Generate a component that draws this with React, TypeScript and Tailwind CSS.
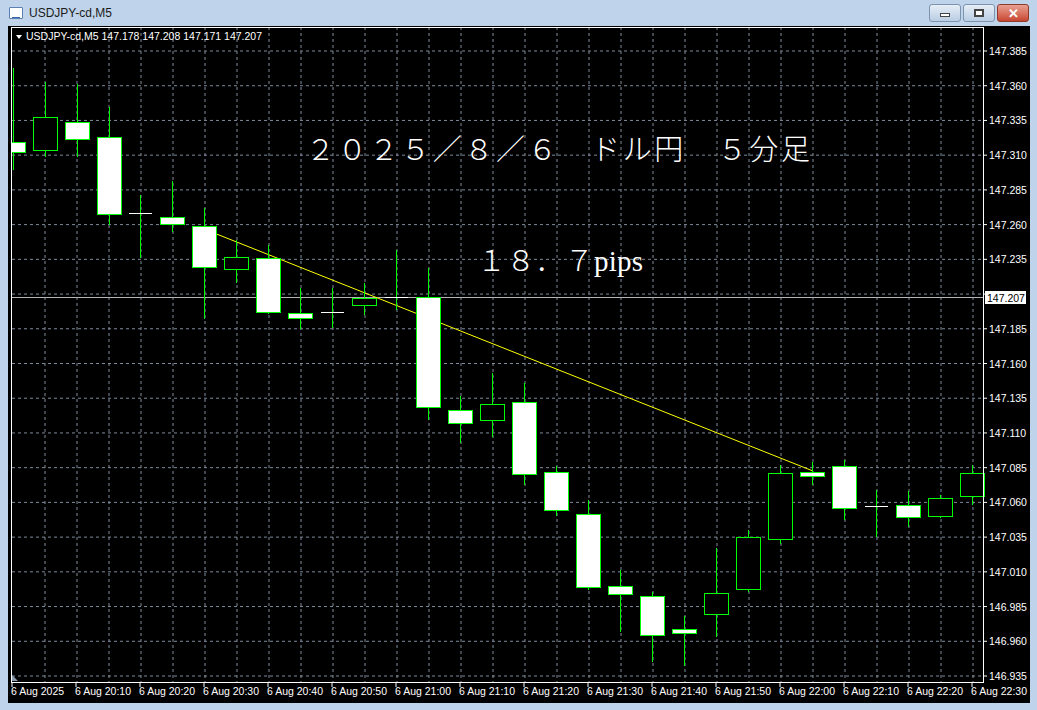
import React from 'react';

type C = [number, number, number, number, number, boolean]; // x, bodyTop, bodyBottom, high, low, bull
const candles: C[] = [
  [13, 142, 152, 68, 170, false],
  [45, 117, 150, 82, 157, true],
  [77, 122, 139, 84, 157, false],
  [109, 137, 214, 107, 225, false],
  [140, 213, 213, 195, 258, false],
  [172, 217, 224, 181, 232, false],
  [204, 226, 267, 208, 319, false],
  [236, 257, 269, 240, 283, true],
  [268, 258, 312, 245, 314, false],
  [300, 313, 318, 288, 329, false],
  [332, 312, 312, 288, 328, false],
  [364, 298, 305, 283, 315, true],
  [396, 297, 297, 250, 310, false],
  [428, 297, 407, 268, 420, false],
  [460, 410, 423, 396, 443, false],
  [492, 404, 420, 373, 437, true],
  [524, 402, 474, 383, 485, false],
  [556, 472, 510, 466, 516, false],
  [588, 514, 587, 500, 590, false],
  [620, 586, 594, 570, 632, false],
  [652, 596, 635, 592, 662, false],
  [684, 629, 633, 616, 666, false],
  [716, 593, 614, 548, 637, true],
  [748, 537, 589, 530, 592, true],
  [780, 473, 539, 465, 544, true],
  [812, 472, 476, 462, 485, false],
  [844, 466, 508, 460, 520, false],
  [876, 506, 506, 490, 537, false],
  [908, 505, 517, 491, 527, false],
  [940, 498, 516, 495, 518, true],
  [972, 473, 496, 465, 505, true],
];

const times = ['6 Aug 2025', '6 Aug 20:10', '6 Aug 20:20', '6 Aug 20:30', '6 Aug 20:40', '6 Aug 20:50', '6 Aug 21:00', '6 Aug 21:10', '6 Aug 21:20', '6 Aug 21:30', '6 Aug 21:40', '6 Aug 21:50', '6 Aug 22:00', '6 Aug 22:10', '6 Aug 22:20', '6 Aug 22:30'];

const step = 625 / 18;
const rows = Array.from({ length: 19 }, (_, k) => ({ y: 51 + k * step, p: (147.385 - k * 0.025).toFixed(3) }));
const cols = Array.from({ length: 30 }, (_, k) => 45 + 32 * k);

function Chart() {
  return (
    <svg viewBox="8 26 1022 677" width="1022" height="677" className="block" style={{ fontFamily: '"Liberation Sans", Arial, sans-serif' }}>
      <rect x="8" y="26" width="1022" height="677" fill="#000" />
      {rows.map((r) => (
        <line key={r.y} x1="12" x2="983" y1={r.y} y2={r.y} stroke="#7f8c9c" strokeDasharray="3 3" />
      ))}
      {cols.map((x) => (
        <line key={x} x1={x} x2={x} y1="27" y2="682" stroke="#7f8c9c" strokeDasharray="3 3" />
      ))}
      <line x1="12" x2="983" y1="297.5" y2="297.5" stroke="#b4b4b4" />
      <line x1="214" y1="233" x2="813" y2="471" stroke="#ffff00" />
      <g>
        {candles.map(([x, t, b, h, l, bull], i) => (
          <g key={i}>
            <line x1={x + 0.5} x2={x + 0.5} y1={h} y2={l} stroke="#00ff00" />
            {b - t < 1 ? (
              <line x1={x - 11} x2={x + 12} y1={t + 0.5} y2={t + 0.5} stroke="#fff" />
            ) : (
              <rect x={x - 11.5} y={t + 0.5} width="24" height={b - t} fill={bull ? '#000' : '#fff'} stroke="#00ff00" />
            )}
          </g>
        ))}
      </g>
      <rect x="8" y="26" width="3" height="677" fill="#000" />
      <line x1="11.5" x2="11.5" y1="27" y2="682" stroke="#fff" />
      <line x1="11" x2="983" y1="682.5" y2="682.5" stroke="#fff" />
      <line x1="983.5" x2="983.5" y1="27" y2="683" stroke="#fff" />
      <line x1="11" x2="984" y1="27.5" y2="27.5" stroke="#fff" />
      <path d="M12 675 L18 681 L12 681 Z" fill="#8a9bb0" />
      {rows.map((r) => (
        <g key={r.p}>
          <line x1="983" x2="987" y1={r.y} y2={r.y} stroke="#fff" />
          {r.p !== '147.210' && <text x="989" y={r.y + 4} fill="#fff" fontSize="10.5">{r.p}</text>}
        </g>
      ))}
      <rect x="985" y="291" width="41" height="13" fill="#fff" />
      <text x="987" y="301.5" fill="#000" fontSize="10.5">147.207</text>
      {times.map((t, k) => (
        <g key={t}>
          <line x1={12 + 64 * k} x2={12 + 64 * k} y1="683" y2="687" stroke="#fff" />
          <text x={11 + 64 * k} y="695" fill="#fff" fontSize="10.5">{t}</text>
        </g>
      ))}
      <path d="M16 35 L22 35 L19 39 Z" fill="#fff" />
      <text x="26" y="40" fill="#fff" fontSize="10.5">USDJPY-cd,M5  147.178 147.208 147.171 147.207</text>
      <text x="306" y="160" fill="#fff" fontSize="29" textLength="504" lengthAdjust="spacing" style={{ fontFamily: '"Noto Sans CJK JP", sans-serif', fontWeight: 300 }}>２０２５／８／６　ドル円　５分足</text>
      <text x="477" y="271" fill="#fff" fontSize="29" textLength="166" lengthAdjust="spacing" style={{ fontFamily: '"Noto Sans CJK JP", sans-serif', fontWeight: 300 }}>１８．７<tspan style={{ fontFamily: '"Liberation Serif", serif' }}>pips</tspan></text>
    </svg>
  );
}

function WinButton({ kind }: { kind: 'min' | 'max' | 'close' }) {
  const close = kind === 'close';
  return (
    <div
      className={`w-[32px] h-[18px] rounded-[3px] border flex items-center justify-center ${
        close ? 'bg-gradient-to-b from-[#e8a093] to-[#c7442f] border-[#8e3b2c]' : 'bg-gradient-to-b from-[#e6eef7] to-[#b9cde3] border-[#7e93ad]'
      }`}
    >
      {kind === 'min' && <div className="w-[10px] h-[4px] bg-white border border-[#444] mt-[4px]" />}
      {kind === 'max' && <div className="w-[10px] h-[8px] bg-white border-[2px] border-[#444]" />}
      {close && <span className="text-white font-bold text-[13px] leading-none" style={{ fontFamily: 'Arial, sans-serif' }}>✕</span>}
    </div>
  );
}

export default function App() {
  return (
    <div className="w-[1037px] h-[710px] bg-[#bfd4ea] overflow-hidden" style={{ fontFamily: '"Liberation Sans", Arial, sans-serif' }}>
      <div className="h-[26px] flex items-center justify-between pl-[9px] pr-[8px]">
        <div className="flex items-center gap-[6px]">
          <div className="w-[14px] h-[12px] bg-white border border-[#5b7fb0] rounded-[1px] flex items-end justify-center">
            <div className="w-[8px] h-[3px] border-b border-[#3a6aa8]" />
          </div>
          <span className="text-[12px] text-[#1b1b1b]">USDJPY-cd,M5</span>
        </div>
        <div className="flex gap-[2px]">
          <WinButton kind="min" />
          <WinButton kind="max" />
          <WinButton kind="close" />
        </div>
      </div>
      <div className="ml-[8px] w-[1022px] h-[677px]">
        <Chart />
      </div>
    </div>
  );
}
